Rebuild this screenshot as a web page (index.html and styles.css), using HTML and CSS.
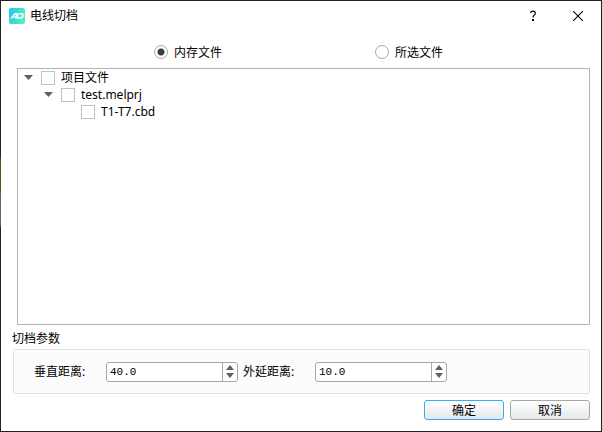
FILE: index.html
```html
<!DOCTYPE html>
<html lang="zh-CN">
<head>
    <meta charset="utf-8">
    <title>电线切档</title>
    <meta name="viewport" content="width=device-width, initial-scale=1">
    <link rel="stylesheet" href="styles.css">
</head>
<body>
    <form class="dialog">
        <header class="titlebar">
            <svg class="logo" viewBox="0 0 16 16" aria-hidden="true">
                <defs>
                    <linearGradient id="logo-fill" x1="0" y1="0" x2="1" y2="0.3">
                        <stop offset="0" stop-color="#1fc3ee"/>
                        <stop offset="1" stop-color="#52efc0"/>
                    </linearGradient>
                </defs>
                <rect width="16" height="16" rx="2" fill="url(#logo-fill)"/>
                <g fill="none" stroke="#fff" stroke-width="1.4">
                    <path d="M1.8 10.6 L6 5.6 H7.6 L6.8 10.6 M4 9.1 H6.5"/>
                    <path d="M9.3 5 L8.4 10 H11.5 Q13.6 10 14 8 Q14.4 5.7 12.2 5.7 H10.5"/>
                </g>
            </svg>
            <h1 class="title">电线切档</h1>
            <button class="title-button" type="button" aria-label="帮助">
                <svg width="8" height="12" viewBox="0 0 8 12">
                    <path d="M1.5 2.8 Q1.8 1.2 4 1.2 Q6.3 1.2 6.3 3.2 Q6.3 4.4 5.2 5.2 Q4 6.1 4 7.6" fill="none" stroke="#000" stroke-width="1.2"/>
                    <rect x="3" y="9" width="2" height="2"/>
                </svg>
            </button>
            <button class="title-button" type="button" aria-label="关闭">
                <svg width="10" height="10" viewBox="0 0 10 10">
                    <path d="M0 0 L10 10 M10 0 L0 10" fill="none" stroke="#000" stroke-width="1.1"/>
                </svg>
            </button>
        </header>

        <div class="content">
            <div class="sources">
                <label class="source source-memory"><input type="radio" name="source" checked>内存文件</label>
                <label class="source source-selected"><input type="radio" name="source">所选文件</label>
            </div>

            <ul class="tree">
                <li>
                    <div class="tree-row">
                        <button class="toggle" type="button" aria-label="折叠"></button>
                        <label><input type="checkbox">项目文件</label>
                    </div>
                    <ul>
                        <li>
                            <div class="tree-row">
                                <button class="toggle" type="button" aria-label="折叠"></button>
                                <label><input type="checkbox">test.melprj</label>
                            </div>
                            <ul>
                                <li>
                                    <div class="tree-row leaf">
                                        <label><input type="checkbox">T1-T7.cbd</label>
                                    </div>
                                </li>
                            </ul>
                        </li>
                    </ul>
                </li>
            </ul>

            <h2 class="params-title">切档参数</h2>
            <div class="params">
                <label class="param-label" for="vertical">垂直距离:</label>
                <div class="spinbox">
                    <input type="number" id="vertical" value="40.0" step="0.1">
                    <div class="steps">
                        <button class="up" type="button" aria-label="增加"></button>
                        <button class="down" type="button" aria-label="减少"></button>
                    </div>
                </div>
                <label class="param-label" for="extend">外延距离:</label>
                <div class="spinbox">
                    <input type="number" id="extend" value="10.0" step="0.1">
                    <div class="steps">
                        <button class="up" type="button" aria-label="增加"></button>
                        <button class="down" type="button" aria-label="减少"></button>
                    </div>
                </div>
            </div>

            <div class="actions">
                <button class="action primary" type="button">确定</button>
                <button class="action" type="button">取消</button>
            </div>
        </div>
    </form>
</body>
</html>
```

FILE: styles.css
```css
* {
    box-sizing: border-box;
    margin: 0;
    padding: 0;
}

/* the desktop shows as a thin edge round the dialog */
body {
    min-height: 100vh;
    display: flex;
    padding: 1px;
    background: linear-gradient(#222 36%, #5a5020 37%, #5a5020 44%, #666 45%, #666 52%, #222 53%);
    color: #000;
    font: 12px/17px "Noto Sans", "Noto Sans CJK SC", sans-serif;
}

button,
input {
    font: inherit;
    color: inherit;
    appearance: none;
}

ul {
    list-style: none;
}

.dialog {
    flex: 1;
    display: flex;
    flex-direction: column;
    background: #fff;
    box-shadow: 1px 0 #222;
}

/* title bar */
.titlebar {
    height: 29px;
    display: flex;
    align-items: center;
    padding: 0 1px 0 8px;
}

.logo {
    width: 16px;
    height: 16px;
    margin-right: 5px;
}

.title {
    flex: 1;
    font-size: 12px;
    font-weight: normal;
}

.title-button {
    width: 45px;
    height: 29px;
    display: flex;
    align-items: center;
    justify-content: center;
    border: none;
    background: none;
}

.content {
    flex: 1;
    display: flex;
    flex-direction: column;
    padding: 0 11px 11px 12px;
}

/* file source */
.sources {
    display: grid;
    grid-template-columns: 137fr auto 153fr auto 147fr;
    align-items: center;
    height: 38px;
    padding: 6px 0 0 4px;
}

.source {
    display: flex;
    align-items: center;
    gap: 6px;
}

.source-memory {
    grid-column: 2;
}

.source-selected {
    grid-column: 4;
}

.source input {
    width: 14px;
    height: 14px;
    border: 1px solid #a8a8a8;
    border-radius: 50%;
    background: #fff;
}

.source input:checked {
    background: radial-gradient(circle, #3c3c3c 3px, #fff 4px);
}

/* project tree */
.tree {
    flex: 1;
    margin-left: 4px;
    border: 1px solid #b4b4b4;
}

.tree ul {
    padding-left: 20px;
}

.tree-row,
.tree-row label {
    display: flex;
    align-items: center;
    height: 17px;
}

.tree-row label {
    gap: 6px;
}

.tree-row input {
    width: 14px;
    height: 14px;
    border: 1px solid #c0c0c0;
    background: #fff;
}

.toggle {
    width: 23px;
    height: 17px;
    padding-left: 6px;
    border: none;
    background: none;
}

.toggle::before {
    content: "";
    display: block;
    width: 9px;
    height: 5px;
    background: #606060;
    clip-path: polygon(0 0, 100% 0, 50% 100%);
}

.leaf {
    padding-left: 23px;
}

/* parameters */
.params-title {
    padding: 5px 0 2px;
    margin-left: -1px;
    font-size: 12px;
    font-weight: normal;
}

.params {
    display: flex;
    align-items: center;
    height: 45px;
    padding-left: 20px;
    border: 1px solid #e0e0e0;
    border-radius: 2px;
    background: #fcfcfc;
}

.param-label {
    width: 72px;
}

.spinbox {
    display: flex;
    width: 132px;
    height: 20px;
    margin-right: 5px;
    border: 1px solid #a8a8a8;
    border-radius: 3px;
    background: #fff;
}

.spinbox input {
    flex: 1;
    min-width: 0;
    padding-left: 3px;
    border: none;
    background: none;
    font: 11px "Liberation Mono", monospace;
    appearance: textfield;
}

.spinbox input::-webkit-inner-spin-button {
    display: none;
}

.steps {
    display: flex;
    flex-direction: column;
    width: 15px;
    padding: 1px 0;
    border-left: 1px solid #a8a8a8;
}

.steps button {
    flex: 1;
    display: flex;
    justify-content: center;
    align-items: center;
    border: none;
    background: none;
}

.steps button::before {
    content: "";
    width: 8px;
    height: 5px;
    background: #606060;
}

.steps .up::before {
    clip-path: polygon(50% 0, 100% 100%, 0 100%);
}

.steps .down::before {
    clip-path: polygon(0 0, 100% 0, 50% 100%);
}

/* bottom buttons */
.actions {
    display: flex;
    justify-content: flex-end;
    gap: 6px;
    padding-top: 6px;
}

.action {
    width: 80px;
    height: 20px;
    border: 1px solid #a8a8a8;
    border-radius: 3px;
    background: linear-gradient(#fff, #e4e8ec);
}

.primary {
    border-color: #3daaf5;
}
```
